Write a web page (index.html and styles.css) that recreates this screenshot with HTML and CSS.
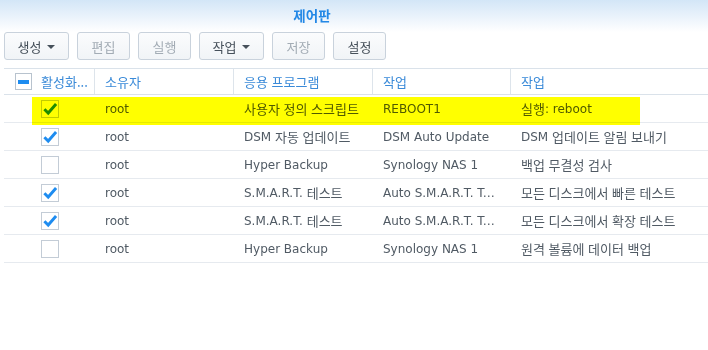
FILE: index.html
```html
<!DOCTYPE html>
<html lang="ko">
<head>
<meta charset="utf-8">
<link rel="stylesheet" href="styles.css">
</head>
<body>
<div class="window">
  <div class="titlebar"><span class="title">제어판</span></div>
  <div class="toolbar">
    <button class="btn wide">생성 <span class="caret"></span></button>
    <button class="btn dis">편집</button>
    <button class="btn dis">실행</button>
    <button class="btn wide">작업 <span class="caret"></span></button>
    <button class="btn dis">저장</button>
    <button class="btn">설정</button>
  </div>
  <div class="grid">
    <div class="row head">
      <div class="cell c1"><span class="cb partial"><span class="bar"></span></span><span class="htext">활성화...</span></div>
      <div class="cell">소유자</div>
      <div class="cell">응용 프로그램</div>
      <div class="cell">작업</div>
      <div class="cell last">작업</div>
    </div>
    <div class="row">
      <div class="cell c1"><span class="cb"><svg viewBox="0 0 16 16"><path d="M3 8.2 L6.4 11.6 L13.4 3.6" /></svg></span></div>
      <div class="cell">root</div>
      <div class="cell"><span class="ko">사용자 정의 스크립트</span></div>
      <div class="cell">REBOOT1</div>
      <div class="cell"><span class="ko">실행</span>: reboot</div>
    </div>
    <div class="row">
      <div class="cell c1"><span class="cb"><svg viewBox="0 0 16 16"><path d="M3 8.2 L6.4 11.6 L13.4 3.6" /></svg></span></div>
      <div class="cell">root</div>
      <div class="cell">DSM&nbsp;<span class="ko">자동 업데이트</span></div>
      <div class="cell">DSM Auto Update</div>
      <div class="cell">DSM&nbsp;<span class="ko">업데이트 알림 보내기</span></div>
    </div>
    <div class="row">
      <div class="cell c1"><span class="cb"></span></div>
      <div class="cell">root</div>
      <div class="cell">Hyper Backup</div>
      <div class="cell">Synology NAS 1</div>
      <div class="cell"><span class="ko">백업 무결성 검사</span></div>
    </div>
    <div class="row">
      <div class="cell c1"><span class="cb"><svg viewBox="0 0 16 16"><path d="M3 8.2 L6.4 11.6 L13.4 3.6" /></svg></span></div>
      <div class="cell">root</div>
      <div class="cell">S.M.A.R.T.&nbsp;<span class="ko">테스트</span></div>
      <div class="cell"><span class="trunc">Auto S.M.A.R.T. Test</span></div>
      <div class="cell"><span class="ko">모든 디스크에서 빠른 테스트</span></div>
    </div>
    <div class="row">
      <div class="cell c1"><span class="cb"><svg viewBox="0 0 16 16"><path d="M3 8.2 L6.4 11.6 L13.4 3.6" /></svg></span></div>
      <div class="cell">root</div>
      <div class="cell">S.M.A.R.T.&nbsp;<span class="ko">테스트</span></div>
      <div class="cell"><span class="trunc">Auto S.M.A.R.T. Test</span></div>
      <div class="cell"><span class="ko">모든 디스크에서 확장 테스트</span></div>
    </div>
    <div class="row">
      <div class="cell c1"><span class="cb"></span></div>
      <div class="cell">root</div>
      <div class="cell">Hyper Backup</div>
      <div class="cell">Synology NAS 1</div>
      <div class="cell"><span class="ko">원격 볼륨에 데이터 백업</span></div>
    </div>
  </div>
  <div class="highlight"></div>
</div>
</body>
</html>
```

FILE: styles.css
```css
html, body {
  margin: 0;
  padding: 0;
  background: #ffffff;
}
body {
  font-family: "DejaVu Sans", "Noto Sans CJK KR", sans-serif;
  font-size: 12px;
  color: #505a64;
}
.window {
  position: relative;
  width: 708px;
  height: 350px;
  overflow: hidden;
}
.titlebar {
  height: 32px;
  box-sizing: border-box;
  padding-right: 84px;
  background: linear-gradient(to bottom, #d3e6f7 0%, #e9f2fb 50%, #ffffff 100%);
  display: flex;
  justify-content: center;
  align-items: flex-start;
}
.title {
  margin-top: 5px;
  font-family: "Noto Sans CJK KR", sans-serif;
  font-size: 13.5px;
  font-weight: 700;
  color: #2388e6;
}
.toolbar {
  display: flex;
  gap: 8px;
  padding: 0 4px;
  height: 28px;
}
.btn {
  box-sizing: border-box;
  width: 53px;
  height: 28px;
  border: 1px solid #c9d2dc;
  border-radius: 3px;
  background: linear-gradient(to bottom, #fbfcfd, #f1f4f7);
  font-family: "Noto Sans CJK KR", sans-serif;
  font-size: 13px;
  color: #46505a;
  padding: 0;
  display: flex;
  align-items: center;
  justify-content: center;
  gap: 6px;
}
.btn.wide {
  width: 65px;
}
.btn.dis {
  color: #a3acb5;
}
.caret {
  width: 0;
  height: 0;
  border-left: 4px solid transparent;
  border-right: 4px solid transparent;
  border-top: 4px solid #46505a;
  margin-top: 1px;
}
.grid {
  margin: 8px 0 0 4px;
}
.row {
  display: grid;
  grid-template-columns: 91px 139px 139px 138px 1fr;
  height: 28px;
  box-sizing: border-box;
  border-bottom: 1px solid #e6eaef;
}
.row.head {
  height: 27px;
  border-top: 1px solid #dae2ea;
  border-bottom: 1px solid #dae2ea;
}
.cell {
  display: flex;
  align-items: center;
  padding-left: 10px;
  white-space: nowrap;
  overflow: hidden;
}
.ko {
  font-family: "Noto Sans CJK KR", sans-serif;
  font-size: 13px;
}
.head .cell {
  color: #3a8ad8;
  font-family: "Noto Sans CJK KR", sans-serif;
  font-size: 13px;
  border-right: 1px solid #dde4eb;
}
.head .cell.last {
  border-right: none;
}
.cell.c1 {
  padding-left: 37px;
}
.head .cell.c1 {
  padding-left: 11px;
}
.htext {
  margin-left: 9px;
}
.cb {
  box-sizing: border-box;
  width: 18px;
  height: 18px;
  border: 1px solid #c3ccd6;
  background: #ffffff;
  display: flex;
  align-items: center;
  justify-content: center;
  flex: none;
}
.cb svg {
  width: 18px;
  height: 18px;
  margin: -1px;
}
.cb svg path {
  fill: none;
  stroke: #1e8cf0;
  stroke-width: 2.6;
  stroke-linecap: butt;
  stroke-linejoin: miter;
}
.cb.partial {
  width: 17px;
  height: 17px;
  border-color: #b8c3ce;
}
.cb .bar {
  width: 11px;
  height: 4px;
  background: #1e8cf0;
}
.trunc {
  display: block;
  width: 114px;
  overflow: hidden;
  text-overflow: ellipsis;
}
.highlight {
  position: absolute;
  left: 32px;
  top: 97px;
  width: 608px;
  height: 28px;
  background: #ffff00;
  mix-blend-mode: multiply;
}
```
